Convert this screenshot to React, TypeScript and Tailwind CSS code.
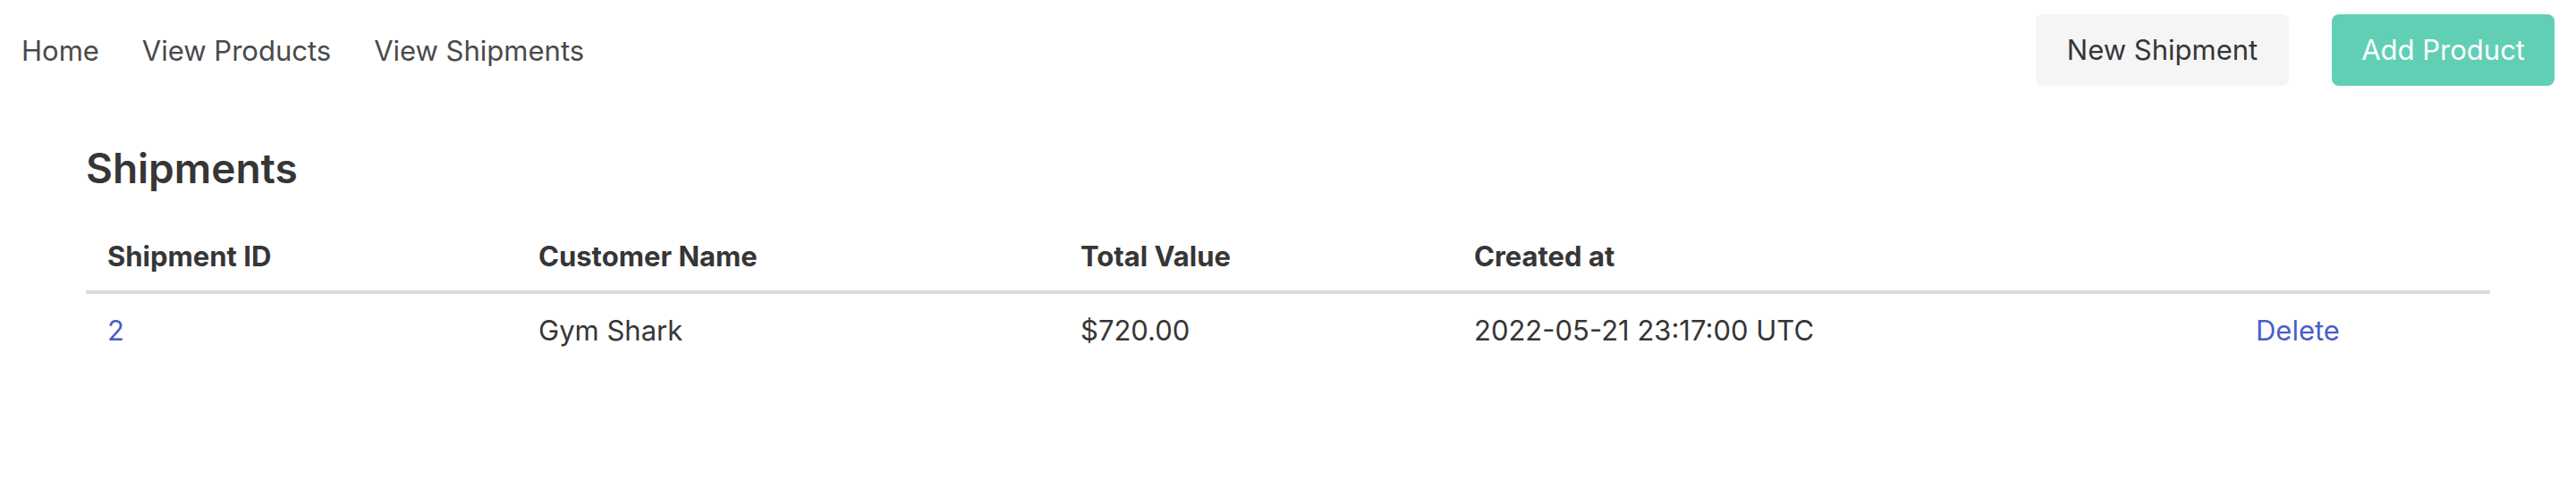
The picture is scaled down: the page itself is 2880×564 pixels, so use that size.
import React from "react";

const navLinks = ["Home", "View Products", "View Shipments"];

const shipments = [
    { id: 2, customer: "Gym Shark", total: "$720.00", createdAt: "2022-05-21 23:17:00 UTC" },
];

const App: React.FC = () => {
    return (
        <div className="min-h-screen bg-white font-['Inter',sans-serif] text-[#4a4a4a]">
            {/* Navbar */}
            <nav className="flex items-stretch justify-between">
                <div className="flex">
                    {navLinks.map((link) => (
                        <a key={link} href="#" className="flex items-center px-6 py-4 text-[31px] leading-[45px] text-[#4a4a4a]">
                            {link}
                        </a>
                    ))}
                </div>
                <div className="flex">
                    <div className="flex items-center px-6 py-4">
                        <button className="h-[80px] rounded-[8px] bg-[#f5f5f5] px-[35px] text-[31px] text-[#363636]">
                            New Shipment
                        </button>
                    </div>
                    <div className="flex items-center px-6 py-4">
                        <button className="h-[80px] rounded-[8px] bg-[#60cfb5] px-[33px] text-[31px] text-white">
                            Add Product
                        </button>
                    </div>
                </div>
            </nav>

            {/* Shipments list */}
            <main className="px-[96px]">
                <h1 className="mt-[46px] text-[46px] font-semibold leading-[60px] text-[#363636]">Shipments</h1>
                <table className="mt-[30px] w-full table-fixed text-left text-[31px] leading-[45px] text-[#363636]">
                    <thead>
                        <tr className="border-b-4 border-[#dbdbdb]">
                            <th className="w-[482px] px-6 py-4 font-bold">Shipment ID</th>
                            <th className="w-[606px] px-6 py-4 font-bold">Customer Name</th>
                            <th className="w-[440px] px-6 py-4 font-bold">Total Value</th>
                            <th className="w-[874px] px-6 py-4 font-bold">Created at</th>
                            <th className="px-6 py-4"></th>
                        </tr>
                    </thead>
                    <tbody>
                        {shipments.map((s) => (
                            <tr key={s.id}>
                                <td className="px-6 pt-[18px] pb-4">
                                    <a href="#" className="text-[#485fc7]">{s.id}</a>
                                </td>
                                <td className="px-6 pt-[18px] pb-4">{s.customer}</td>
                                <td className="px-6 pt-[18px] pb-4">{s.total}</td>
                                <td className="px-6 pt-[18px] pb-4">{s.createdAt}</td>
                                <td className="px-6 pt-[18px] pb-4">
                                    <a href="#" className="text-[#485fc7]">Delete</a>
                                </td>
                            </tr>
                        ))}
                    </tbody>
                </table>
            </main>
        </div>
    );
};

export default App;
